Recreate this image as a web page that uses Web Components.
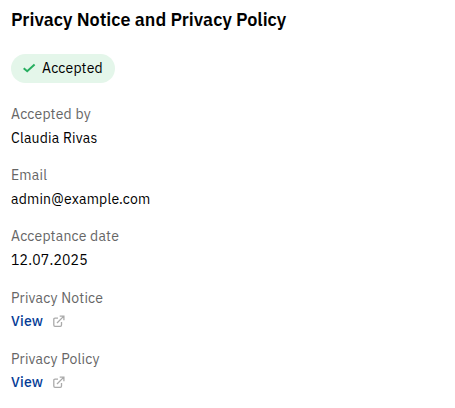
<!DOCTYPE html>
<html lang="en">
<head>
<meta charset="utf-8">
<title>Privacy Notice and Privacy Policy</title>
<style>
body{margin:0;background:#fff;font-family:"IBM Plex Sans",Roboto,"Liberation Sans",sans-serif;color:#000}
</style>
</head>
<body>
<privacy-panel>
  <span slot="title">Privacy Notice and Privacy Policy</span>
  <status-badge slot="status">Accepted</status-badge>
  <detail-field label="Accepted by">Claudia Rivas</detail-field>
  <detail-field label="Email">admin@example.com</detail-field>
  <detail-field label="Acceptance date">12.07.2025</detail-field>
  <detail-field label="Privacy Notice"><external-link>View</external-link></detail-field>
  <detail-field label="Privacy Policy"><external-link>View</external-link></detail-field>
</privacy-panel>
<script>
function define(name, html, setup) {
  const template = document.createElement('template');
  template.innerHTML = html;
  customElements.define(name, class extends HTMLElement {
    constructor() {
      super();
      this.attachShadow({mode: 'open'}).append(template.content.cloneNode(true));
    }
    connectedCallback() { if (setup) setup(this); }
  });
}

define('privacy-panel', `
<style>
:host{display:block;padding:8px 11px}
h2{margin:0 0 22px;font-size:18px;line-height:24px;font-weight:600;letter-spacing:0;white-space:nowrap}
.fields{display:flex;flex-direction:column;gap:13.25px;margin-top:18.85px}
</style>
<h2><slot name="title"></slot></h2>
<slot name="status"></slot>
<div class="fields"><slot></slot></div>`);

define('status-badge', `
<style>
:host{display:flex;box-sizing:border-box;width:104px;height:29px;padding:0 0 1px 11px;align-items:center;gap:6px;border-radius:15px;background:#e4f6ea;font-size:14px;line-height:20px;letter-spacing:.2px}
svg{display:block;flex:none}
</style>
<svg width="14" height="12" viewBox="0 0 14 12" fill="none" stroke="#27ae60" stroke-width="2"><path d="M1.7 6.2 5.2 9.2 12.6 2.4"/></svg>
<span><slot></slot></span>`);

define('detail-field', `
<style>
:host{display:block;font-size:14px;white-space:nowrap;letter-spacing:.2px}
.label{height:24px;line-height:24px;color:#666}
.value{height:24px;line-height:24px}
</style>
<div class="label"></div><div class="value"><slot></slot></div>`,
el => { el.shadowRoot.querySelector('.label').textContent = el.getAttribute('label'); });

define('external-link', `
<style>
:host{display:flex;align-items:center;height:23px;gap:9px}
a{color:#053c96;font-weight:500;letter-spacing:.2px}
svg{display:block}
</style>
<a><slot></slot></a>
<svg width="13" height="13" viewBox="0 0 13 13" fill="none" stroke="#aaa" stroke-width="1.3"><path d="M6 3.1H3Q1.8 3.1 1.8 4.3V10.1Q1.8 11.3 3 11.3H8.3Q9.5 11.3 9.5 10.1V7M5 8 11.6 1.4M7.7 1.1H11.9V5.3"/></svg>`);
</script>
</body>
</html>
